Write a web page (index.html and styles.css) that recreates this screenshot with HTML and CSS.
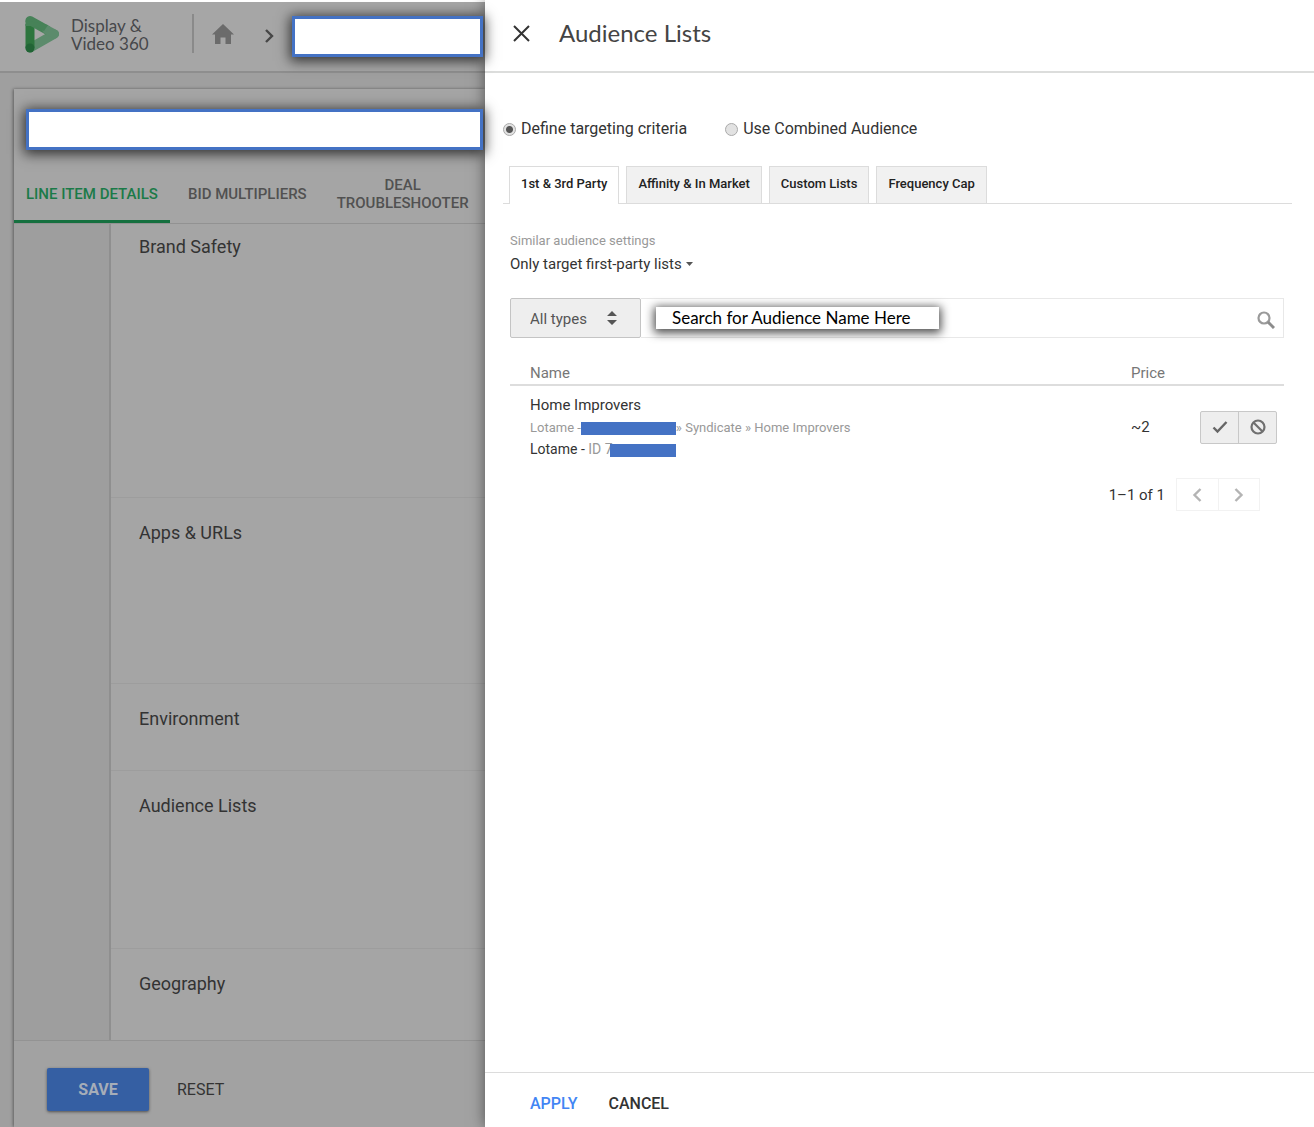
FILE: index.html
```html
<!DOCTYPE html>
<html lang="en">

<head>
  <meta charset="UTF-8">
  <meta name="viewport" content="width=device-width, initial-scale=1.0">
  <title>Audience Lists - Display &amp; Video 360</title>
  <link rel="stylesheet" href="styles.css">
</head>

<body>
  <div class="page">
    <header class="topbar">
      <svg class="logo" width="35" height="40" viewBox="0 0 35 40">
        <path d="M5 34 L29.500 20" stroke="#5c8b6c" stroke-width="9" stroke-linecap="round" />
        <path d="M5 10 V34" stroke="#2d753e" stroke-width="9" />
        <path d="M5 6.500 L22 16" stroke="#478258" stroke-width="9" stroke-linecap="round" />
        <path d="M22 16 L29.500 20" stroke="#5c8b6c" stroke-width="9" stroke-linecap="round" />
        <path d="M0.500 6.500 V12 H9.500 L19 17 L23 11 z" fill="#478258" />
        <circle cx="5" cy="34" r="4.500" fill="#216435" />
      </svg>
      <div class="product">Display &amp;<br>Video 360</div>
      <a class="home" href="#" aria-label="Home">
        <svg width="22" height="20" viewBox="0 0 22 20">
          <path d="M11 0 L22 10.500 H19 V20 H13.500 V13.500 H8.500 V20 H3 V10.500 H0 z" fill="#6b6b6b" />
        </svg>
      </a>
      <svg class="crumb-arrow" width="10" height="14" viewBox="0 0 10 14">
        <path d="M2 1 L8 7 L2 13" fill="none" stroke="#474747" stroke-width="2.400" />
      </svg>
      <div class="redacted crumb"></div>
    </header>

    <main class="line-item">
      <div class="redacted item-name"></div>
      <nav class="item-tabs">
        <a class="item-tab active" href="#">LINE ITEM DETAILS</a>
        <a class="item-tab" href="#">BID MULTIPLIERS</a>
        <a class="item-tab" href="#">DEAL<br>TROUBLESHOOTER</a>
      </nav>
      <div class="settings">
        <section class="setting brand-safety">Brand Safety</section>
        <section class="setting apps">Apps &amp; URLs</section>
        <section class="setting environment">Environment</section>
        <section class="setting audience">Audience Lists</section>
        <section class="setting geography">Geography</section>
      </div>
      <footer class="item-footer">
        <button class="btn-save" type="button">SAVE</button>
        <button class="btn-reset" type="button">RESET</button>
      </footer>
    </main>
  </div>

  <aside class="drawer">
    <header class="drawer-header">
      <button class="btn-close" type="button" aria-label="Close">
        <svg width="17" height="17" viewBox="0 0 17 17">
          <path d="M1 1 L16 16 M16 1 L1 16" stroke="#333333" stroke-width="2" />
        </svg>
      </button>
      <h1>Audience Lists</h1>
    </header>

    <div class="drawer-body">
      <div class="modes">
        <label class="mode"><input type="radio" name="mode" checked>Define targeting criteria</label>
        <label class="mode"><input type="radio" name="mode">Use Combined Audience</label>
      </div>

      <div class="list-tabs" role="tablist">
        <button class="list-tab active" type="button" role="tab" aria-selected="true">1st &amp; 3rd Party</button>
        <button class="list-tab" type="button" role="tab">Affinity &amp; In Market</button>
        <button class="list-tab" type="button" role="tab">Custom Lists</button>
        <button class="list-tab" type="button" role="tab">Frequency Cap</button>
      </div>

      <div class="panel">
        <label class="hint" for="similar">Similar audience settings</label>
        <div class="similar">
          <select id="similar">
            <option>Only target first-party lists</option>
          </select>
          <svg width="7" height="4" viewBox="0 0 7 4">
            <path d="M0 0 H7 L3.500 4 z" fill="#555555" />
          </svg>
        </div>

        <form class="search">
          <div class="type">
            <select aria-label="Type">
              <option>All types</option>
            </select>
            <svg width="10" height="14" viewBox="0 0 10 14">
              <path d="M5 0 L10 5 H0 z M0 9 H10 L5 14 z" fill="#555555" />
            </svg>
          </div>
          <div class="search-box">
            <input type="text" aria-label="Search" placeholder="Search for Audience Name Here">
            <button class="btn-search" type="button" aria-label="Search">
              <svg width="18" height="18" viewBox="0 0 18 18">
                <circle cx="7" cy="7" r="5.500" fill="none" stroke="#9a9a9a" stroke-width="2.200" />
                <path d="M11 11 L17 17" stroke="#8c8c8c" stroke-width="3" />
              </svg>
            </button>
          </div>
        </form>

        <table class="lists">
          <thead>
            <tr>
              <th class="col-name">Name</th>
              <th class="col-price">Price</th>
              <th class="col-actions"></th>
            </tr>
          </thead>
          <tbody>
            <tr>
              <td class="col-name">
                <div class="list-name">Home Improvers</div>
                <div class="list-path">Lotame -<span class="mask mask-path"></span>» Syndicate » Home Improvers</div>
                <div class="list-id">Lotame - <span>ID 7</span><span class="mask mask-id"></span></div>
              </td>
              <td class="col-price">~2</td>
              <td class="col-actions">
                <div class="actions">
                  <button type="button" aria-label="Include">
                    <svg width="16" height="14" viewBox="0 0 16 14">
                      <path d="M1.500 7.500 L5.500 11.500 L14.500 2" fill="none" stroke="#666666" stroke-width="2.400" />
                    </svg>
                  </button>
                  <button type="button" aria-label="Exclude">
                    <svg width="16" height="16" viewBox="0 0 16 16">
                      <circle cx="8" cy="8" r="6.500" fill="none" stroke="#707070" stroke-width="2.200" />
                      <path d="M3.500 3.500 L12.500 12.500" stroke="#707070" stroke-width="2.200" />
                    </svg>
                  </button>
                </div>
              </td>
            </tr>
          </tbody>
        </table>

        <div class="pager">
          <span>1–1 of 1</span>
          <div class="pager-buttons">
            <button type="button" aria-label="Previous page">
              <svg width="10" height="14" viewBox="0 0 10 14">
                <path d="M8.500 1 L2.500 7 L8.500 13" fill="none" stroke="#b4b4b4" stroke-width="2.400" />
              </svg>
            </button>
            <button type="button" aria-label="Next page">
              <svg width="10" height="14" viewBox="0 0 10 14">
                <path d="M1.500 1 L7.500 7 L1.500 13" fill="none" stroke="#b4b4b4" stroke-width="2.400" />
              </svg>
            </button>
          </div>
        </div>
      </div>
    </div>

    <footer class="drawer-footer">
      <button class="btn-apply" type="button">APPLY</button>
      <button class="btn-cancel" type="button">CANCEL</button>
    </footer>
  </aside>
</body>

</html>
```
FILE: styles.css
```css
* {
  box-sizing: border-box;
}

body {
  margin: 0;
  min-height: 100vh;
  display: flex;
  background-color: #ffffff;
  color: #333333;
  font-family: Roboto, sans-serif;
  font-size: 16px;
  line-height: 18px;
}

button, select, input {
  font: inherit;
  color: inherit;
}

button {
  padding: 0;
  border: none;
  background: none;
  cursor: pointer;
}

svg {
  display: block;
  flex: none;
}

a {
  color: inherit;
  text-decoration: none;
}

/* dimmed page behind the drawer */
.page {
  flex: 0 0 485px;
  min-width: 0;
  display: flex;
  flex-direction: column;
  background-color: #9f9f9f;
  border-top: 2px solid #ffffff;
}

.topbar {
  height: 71px;
  display: flex;
  align-items: center;
  padding: 0 2px 6px 25px;
  background-color: #a6a6a6;
  border-bottom: 2px solid #8e8e8e;
}

.product {
  margin-left: 11px;
  width: 123px;
  padding: 3px 0 0;
  border-right: 2px solid #8a8a8a;
  color: #46484b;
  font-family: Lato, sans-serif;
  font-size: 17px;
}

.home {
  margin-left: 18px;
}

.crumb-arrow {
  margin: 4px 0 0 30px;
}

.redacted {
  position: relative;
  z-index: 2;
  height: 41px;
  background-color: #ffffff;
  border: 3px solid #4472c4;
  box-shadow: 0 2px 12px 2px rgba(0, 0, 0, 0.7);
}

.crumb {
  flex: 1;
  margin-left: 18px;
  margin-top: 6px;
}

.line-item {
  flex: 1;
  margin: 16px 0 0 14px;
  display: flex;
  flex-direction: column;
  background-color: #a5a5a5;
  box-shadow: -1px 0 3px rgba(0, 0, 0, 0.4);
}

.item-name {
  margin: 20px 2px 0 12px;
}

.item-tabs {
  height: 74px;
  display: flex;
  gap: 6px;
  border-bottom: 1px solid #929292;
}

.item-tab {
  padding: 18px 12px 0;
  display: flex;
  align-items: center;
  text-align: center;
  color: #515151;
  font-size: 15px;
  font-weight: 500;
  white-space: nowrap;
  border-bottom: 3px solid transparent;
}

.item-tab.active {
  color: #1b7a48;
  border-color: #15703f;
}

.settings {
  flex: 1;
  margin-left: 95px;
  display: flex;
  flex-direction: column;
  border-left: 2px solid #8f8f8f;
  box-shadow: -95px 0 0 #9e9e9e;
}

.setting {
  padding: 26px 28px 0;
  border-bottom: 1px solid #9d9d9d;
  color: #333333;
  font-size: 18px;
}

.brand-safety {
  padding-top: 14px;
  height: 274px;
}

.apps {
  height: 186px;
}

.environment {
  height: 87px;
}

.audience {
  height: 178px;
}

.geography {
  flex: 1;
  border: none;
}

.item-footer {
  height: 87px;
  padding: 11px 33px 0;
  display: flex;
  align-items: center;
  gap: 28px;
  background-color: #a2a2a2;
  border-top: 1px solid #939393;
}

.btn-save {
  width: 102px;
  height: 43px;
  border-radius: 2px;
  background-color: #355fa3;
  color: #a6adb8;
  font-weight: 700;
  box-shadow: 0 1px 3px rgba(0, 0, 0, 0.5);
}

/* drawer */
.drawer {
  position: relative;
  z-index: 1;
  flex: 1;
  min-width: 0;
  display: flex;
  flex-direction: column;
  background-color: #ffffff;
  box-shadow: 0 0 14px rgba(0, 0, 0, 0.5);
}

.drawer-header {
  height: 73px;
  display: flex;
  align-items: center;
  gap: 29px;
  padding: 0 28px 5px;
  border-bottom: 2px solid #dcdddc;
}

.drawer-header h1 {
  margin: 0;
  color: #444444;
  font-family: Lato, sans-serif;
  font-size: 24px;
  font-weight: 400;
}

.drawer-body {
  flex: 1;
  padding: 47px 22px 0 18px;
}

.modes {
  display: flex;
  gap: 38px;
}

.mode {
  display: flex;
  align-items: center;
  gap: 5px;
}

.mode input {
  appearance: none;
  width: 13px;
  height: 13px;
  margin: 0;
  border: 1px solid #aaaaaa;
  border-radius: 50%;
  background-color: #e2e2e2;
}

.mode input:checked {
  background-image: radial-gradient(#555555 3px, transparent 4px);
}

.list-tabs {
  display: flex;
  gap: 7px;
  margin-top: 28px;
  padding-left: 6px;
  border-bottom: 1px solid #dcdcdc;
}

.list-tab {
  height: 37px;
  padding: 0 11px 2px;
  background-color: #f1f1f1;
  border: 1px solid #dcdcdc;
  border-bottom: none;
  color: #222222;
  font-size: 13px;
  font-weight: 500;
}

.list-tab.active {
  height: 38px;
  margin-bottom: -1px;
  padding-bottom: 3px;
  background-color: #ffffff;
}

.panel {
  padding: 28px 8px 0 7px;
}

.hint {
  display: block;
  color: #999999;
  font-size: 13px;
}

.similar {
  display: flex;
  align-items: center;
  gap: 4px;
  margin-top: 5px;
}

.similar select {
  appearance: none;
  padding: 0;
  border: none;
  background: none;
  font-size: 15px;
}

.search {
  display: flex;
  margin-top: 25px;
}

.type {
  position: relative;
}

.type select {
  appearance: none;
  width: 131px;
  height: 40px;
  padding: 1px 19px 0;
  border: 1px solid #c4c4c4;
  border-radius: 2px;
  background-color: #eeeeee;
  color: #555555;
  font-size: 15px;
}

.type svg {
  position: absolute;
  top: 13px;
  right: 24px;
  pointer-events: none;
}

.search-box {
  flex: 1;
  display: flex;
  align-items: center;
  justify-content: space-between;
  padding: 0 8px 0 15px;
  border: 1px solid #e8e8e8;
  border-left: none;
}

.search-box input {
  width: 283px;
  height: 22px;
  padding: 0 16px 1px;
  border: none;
  background-color: #ffffff;
  font-family: Lato, sans-serif;
  font-size: 17px;
  box-shadow: 0 2px 10px 2px rgba(0, 0, 0, 0.7);
}

.search-box input::placeholder {
  color: #000000;
  opacity: 1;
}

.btn-search {
  padding-top: 4px;
}

.lists {
  width: 100%;
  margin-top: 22px;
  border-collapse: collapse;
  font-size: 15px;
}

.lists th {
  padding: 4px 0 2px;
  border-bottom: 2px solid #dddddd;
  color: #777777;
  font-weight: 400;
  text-align: left;
}

.lists td {
  padding: 10px 0 0;
}

.lists .col-name {
  padding-left: 20px;
}

.col-price {
  width: 69px;
}

.col-actions {
  width: 84px;
}

.list-path {
  margin: 5px 0 3px;
  color: #999999;
  font-size: 13px;
}

.list-id {
  font-size: 14px;
}

.list-id span {
  color: #999999;
}

.mask {
  display: inline-block;
  height: 13px;
  background-color: #4472c4;
  vertical-align: -3px;
}

.mask-path {
  width: 95px;
}

.mask-id {
  width: 66px;
  margin-left: -3px;
}

.actions {
  display: flex;
  width: 77px;
  height: 33px;
  border: 1px solid #c8c8c8;
  border-radius: 2px;
  background-color: #eeeeee;
}

.actions button, .pager-buttons button {
  flex: 1;
  display: flex;
  align-items: center;
  justify-content: center;
}

.actions button + button {
  border-left: 1px solid #c8c8c8;
}

.pager {
  display: flex;
  align-items: center;
  justify-content: flex-end;
  gap: 11px;
  margin-top: 20px;
  padding-right: 24px;
  font-size: 15px;
}

.pager-buttons {
  display: flex;
  width: 84px;
  height: 33px;
  border: 1px solid #f2f2f2;
}

.pager-buttons button + button {
  border-left: 1px solid #f2f2f2;
}

.drawer-footer {
  height: 55px;
  display: flex;
  align-items: center;
  gap: 31px;
  padding: 7px 45px 0;
  border-top: 1px solid #dcdcdc;
  font-weight: 500;
}

.btn-apply {
  color: #4285f4;
}
```
